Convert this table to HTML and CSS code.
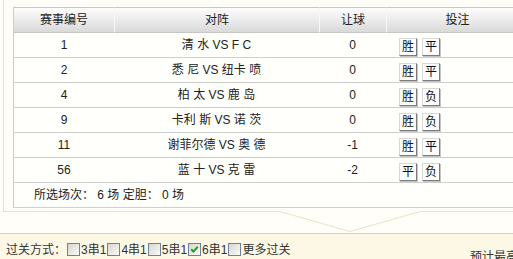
FILE: index.html
```html
<!DOCTYPE html>
<html lang="zh-CN">
<head>
<meta charset="utf-8">
<title>投注</title>
<link rel="stylesheet" href="styles.css">
</head>
<body>
<div class="panel">
  <table class="matches">
    <colgroup><col class="c1"><col class="c2"><col class="c3"><col class="c4"></colgroup>
    <thead>
      <tr><th>赛事编号</th><th>对阵</th><th>让球</th><th>投注</th></tr>
    </thead>
    <tbody>
      <tr><td>1</td><td>清 水 VS F C</td><td>0</td><td class="bet"><div class="bets"><span class="btn">胜</span><span class="btn">平</span></div></td></tr>
      <tr><td>2</td><td>悉 尼 VS 纽卡 喷</td><td>0</td><td class="bet"><div class="bets"><span class="btn">胜</span><span class="btn">平</span></div></td></tr>
      <tr><td>4</td><td>柏 太 VS 鹿 岛</td><td>0</td><td class="bet"><div class="bets"><span class="btn">胜</span><span class="btn">负</span></div></td></tr>
      <tr><td>9</td><td>卡利 斯 VS 诺 茨</td><td>0</td><td class="bet"><div class="bets"><span class="btn">胜</span><span class="btn">负</span></div></td></tr>
      <tr><td>11</td><td>谢菲尔德 VS 奥 德</td><td>-1</td><td class="bet"><div class="bets"><span class="btn">胜</span><span class="btn">平</span></div></td></tr>
      <tr><td>56</td><td>蓝 十 VS 克 雷</td><td>-2</td><td class="bet"><div class="bets"><span class="btn">平</span><span class="btn">负</span></div></td></tr>
      <tr class="summary"><td colspan="4">所选场次<span class="colon">：</span> 6 场 定胆<span class="colon">：</span> 0 场</td></tr>
    </tbody>
  </table>
</div>
<div class="notch">
  <svg width="510" height="22" viewBox="0 0 510 22"><polyline points="0,0.5 277,0.5 347,20.5 417,0.5 510,0.5" fill="none" stroke="#e9e3c6" stroke-width="1"/></svg>
</div>
<div class="pass">
  <div class="ways">
    <span class="label">过关方式<span class="colon">：</span></span>
    <span class="cb"></span><span>3串1</span>
    <span class="cb"></span><span>4串1</span>
    <span class="cb"></span><span>5串1</span>
    <span class="cb on"><svg width="11" height="11" viewBox="0 0 11 11"><path d="M2.2 5.2 L4.4 7.6 L8.8 2.8" fill="none" stroke="#21a121" stroke-width="2"/></svg></span><span>6串1</span>
    <span class="cb"></span><span>更多过关</span>
  </div>
  <div class="est">预计最高</div>
</div>
</body>
</html>
```
FILE: styles.css
```css
html, body {
  margin: 0;
  padding: 0;
  overflow: hidden;
  background: #fffef9;
}
body {
  font-family: "Liberation Sans", "Noto Sans CJK SC", sans-serif;
  font-size: 12px;
  color: #222;
}
.colon {
  display: inline-block;
  width: 12px;
  text-align: center;
}
.panel {
  margin-left: 3px;
  border-left: 1px solid #e9e3c6;
  padding: 7px 0 3px 9px;
}
.matches {
  border-collapse: separate;
  border-spacing: 0;
  table-layout: fixed;
  width: 515px;
  border-left: 1px solid #ccccd6;
  background: #fffffc;
}
.c1 { width: 100px; }
.c2 { width: 205px; }
.c3 { width: 67px; }
.c4 { width: 142px; }
.matches th {
  font-weight: normal;
  height: 24px;
  line-height: 24px;
  padding: 0;
  background: linear-gradient(#fdfdfd, #d9d9d9);
  border-top: 1px solid #c6c6c6;
  border-bottom: 1px solid #c6c6c6;
  border-left: 1px solid #f8f8f8;
  color: #222;
}
.matches th:first-child { border-left: 0; }
.matches td {
  height: 24px;
  line-height: 24px;
  padding: 0;
  text-align: center;
  border-bottom: 1px solid #cecece;
  white-space: nowrap;
}
.matches td.bet { text-align: left; padding-left: 13px; }
.bets {
  display: flex;
  gap: 5px;
  height: 24px;
  padding-top: 5px;
  box-sizing: border-box;
}
.btn {
  width: 16px;
  height: 16px;
  line-height: 16px;
  text-align: center;
  background: #fdfdfd;
  border: 1px solid;
  border-color: #d8d8d8 #7c7c7c #7c7c7c #d8d8d8;
  box-shadow: 1px 1px 0 #c4c4c4;
  color: #111;
}
.summary td {
  text-align: left;
  padding-left: 20px;
}
.notch {
  margin-left: 3px;
  height: 22px;
}
.notch svg { display: block; }
.pass {
  border-top: 1px solid #e4d39d;
  background: #fdf8e6;
  display: grid;
  grid-template-columns: 464px max-content;
  padding-left: 6px;
  height: 40px;
  color: #333;
}
.ways {
  display: flex;
  align-items: center;
  height: 24px;
  margin-top: 2px;
  white-space: nowrap;
}
.cb {
  width: 13px;
  height: 13px;
  box-sizing: border-box;
  border: 1px solid #6f8396;
  background: linear-gradient(135deg, #d6d6d0, #fbfbf9);
  display: flex;
  align-items: center;
  justify-content: center;
  margin: 2px 1px 0;
}
.cb svg { display: block; }
.est {
  margin-top: 11px;
  line-height: 24px;
  white-space: nowrap;
}
```
